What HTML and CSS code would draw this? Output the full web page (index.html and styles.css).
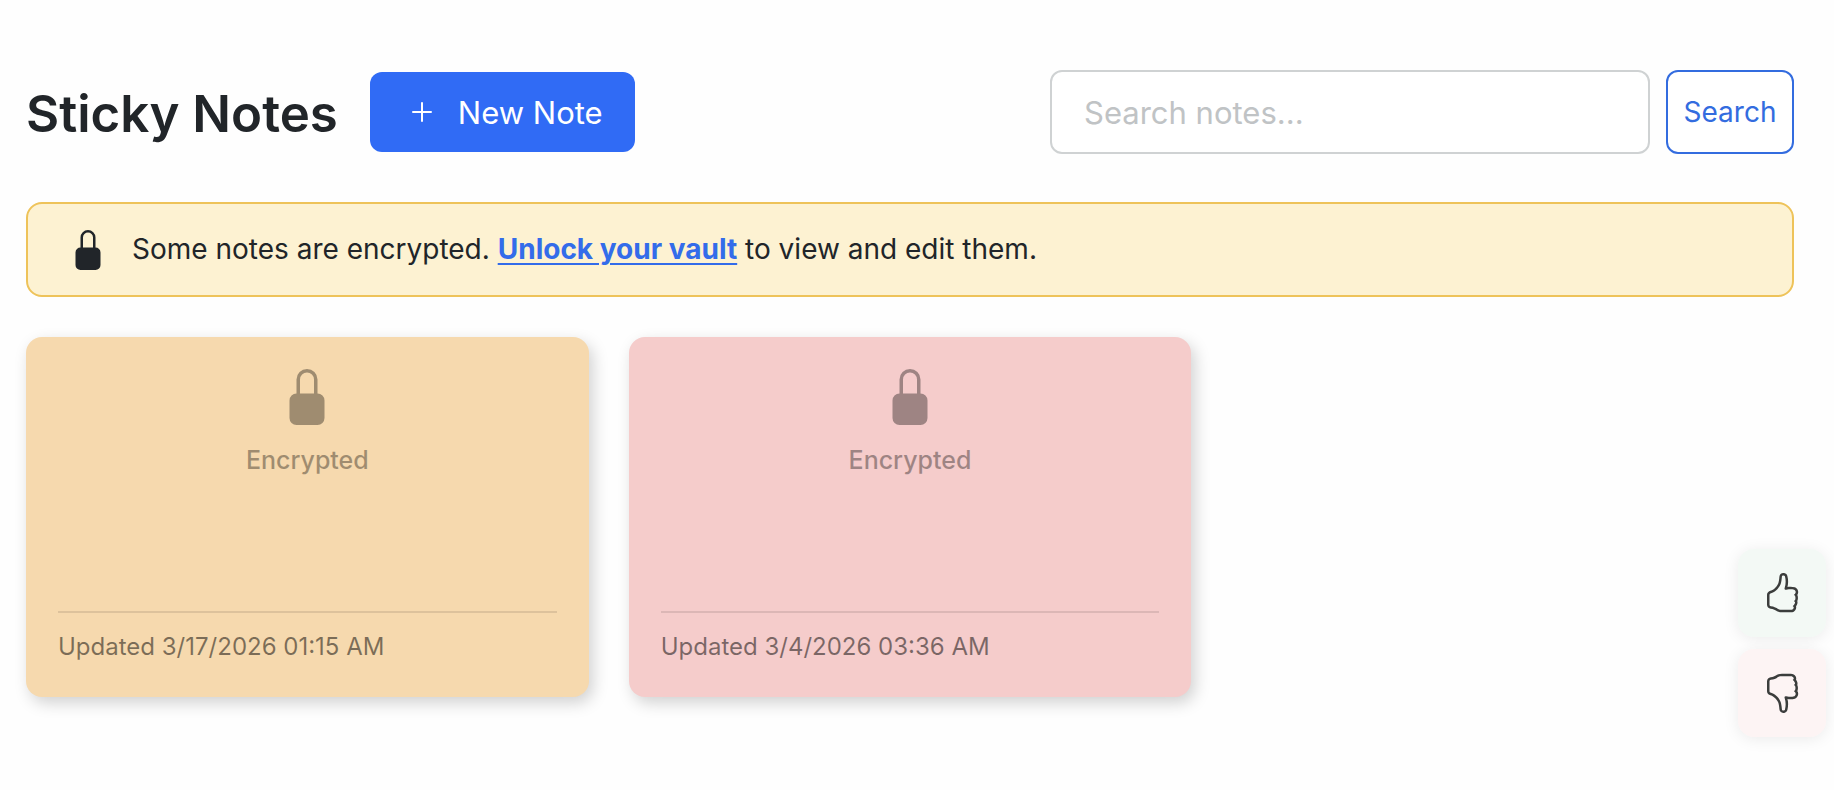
FILE: index.html
```
<!DOCTYPE html>
<html lang="en">
<head>
  <meta charset="utf-8">
  <title>Sticky Notes</title>
  <link rel="stylesheet" href="styles.css">
</head>
<body>
  <svg class="icon-defs" aria-hidden="true">
    <symbol id="lock" viewBox="0 0 16 16">
      <path d="M8 1a2 2 0 0 1 2 2v4H6V3a2 2 0 0 1 2-2zm3 6V3a3 3 0 0 0-6 0v4a2 2 0 0 0-2 2v5a2 2 0 0 0 2 2h6a2 2 0 0 0 2-2V9a2 2 0 0 0-2-2z"/>
    </symbol>
    <symbol id="thumb" viewBox="0 0 16 16">
      <path d="M8.864.046C7.908-.193 7.02.53 6.956 1.466c-.072 1.051-.23 2.016-.428 2.59-.125.36-.479 1.013-1.04 1.639-.557.623-1.282 1.178-2.131 1.41C2.685 7.288 2 7.87 2 8.72v4.001c0 .845.682 1.464 1.448 1.545 1.07.114 1.564.415 2.068.723l.048.03c.272.165.578.348.97.484.397.136.861.217 1.466.217h3.5c.937 0 1.599-.477 1.934-1.064a1.86 1.86 0 0 0 .254-.912c0-.152-.023-.312-.077-.464.201-.263.38-.578.488-.901.11-.33.172-.762.004-1.149.069-.13.12-.269.159-.403.077-.27.113-.568.113-.857 0-.288-.036-.585-.113-.856a2.144 2.144 0 0 0-.138-.362 1.9 1.9 0 0 0 .234-1.734c-.206-.592-.682-1.1-1.2-1.272-.847-.282-1.803-.276-2.516-.211a9.84 9.84 0 0 0-.443.05 9.365 9.365 0 0 0-.062-4.509A1.38 1.38 0 0 0 9.125.111L8.864.046zM11.5 14.721H8c-.51 0-.863-.069-1.14-.164-.281-.097-.506-.228-.776-.393l-.04-.024c-.555-.339-1.198-.731-2.49-.868-.333-.036-.554-.29-.554-.55V8.72c0-.254.226-.543.62-.65 1.095-.3 1.977-.996 2.614-1.708.635-.71 1.064-1.475 1.238-1.978.243-.7.407-1.768.482-2.85.025-.362.36-.594.667-.518l.262.066c.16.04.258.143.288.255a8.34 8.34 0 0 1-.145 4.725.5.5 0 0 0 .595.644l.003-.001.014-.003.058-.014a8.908 8.908 0 0 1 1.036-.157c.663-.06 1.457-.054 2.11.164.175.058.45.3.57.65.107.308.087.67-.266 1.022l-.353.353.353.354c.043.043.105.141.154.315.048.167.075.37.075.581 0 .212-.027.414-.075.582-.05.174-.111.272-.154.315l-.353.353.353.354c.047.047.109.177.005.488a2.224 2.224 0 0 1-.505.805l-.353.353.353.354c.006.005.041.05.041.17a.866.866 0 0 1-.121.416c-.165.288-.503.56-1.066.56z"/>
    </symbol>
  </svg>

  <main class="page">
    <header class="header">
      <h1>Sticky Notes</h1>
      <button type="button" class="btn btn-primary">
        <svg class="icon-plus" viewBox="0 0 16 16" aria-hidden="true">
          <path d="M8 3.5v9M3.5 8h9"/>
        </svg>
        New Note
      </button>
      <form class="search">
        <input type="search" class="search-input" placeholder="Search notes..." aria-label="Search notes">
        <button type="button" class="btn btn-outline">Search</button>
      </form>
    </header>

    <div class="vault-banner">
      <svg class="icon-lock" aria-hidden="true"><use href="#lock"/></svg>
      <p>Some notes are encrypted. <a href="#">Unlock your vault</a> to view and edit them.</p>
    </div>

    <section class="notes">
      <article class="note note-orange">
        <div class="note-locked">
          <svg class="icon-lock-lg" aria-hidden="true"><use href="#lock"/></svg>
          <span>Encrypted</span>
        </div>
        <footer class="note-footer">Updated 3/17/2026 01:15 AM</footer>
      </article>
      <article class="note note-pink">
        <div class="note-locked">
          <svg class="icon-lock-lg" aria-hidden="true"><use href="#lock"/></svg>
          <span>Encrypted</span>
        </div>
        <footer class="note-footer">Updated 3/4/2026 03:36 AM</footer>
      </article>
    </section>
  </main>

  <div class="feedback">
    <button type="button" class="feedback-btn feedback-up" aria-label="Thumbs up">
      <svg class="icon-thumb" aria-hidden="true"><use href="#thumb"/></svg>
    </button>
    <button type="button" class="feedback-btn feedback-down" aria-label="Thumbs down">
      <svg class="icon-thumb" aria-hidden="true"><use href="#thumb"/></svg>
    </button>
  </div>
</body>
</html>
```
FILE: styles.css
```
* {
  box-sizing: border-box;
}

body {
  margin: 0;
  background-color: #fefefe;
  color: #212529;
  font-family: Inter, "Liberation Sans", sans-serif;
}

svg {
  flex-shrink: 0;
  fill: currentColor;
}

.icon-defs {
  display: none;
}

.page {
  padding: 70px 40px 40px 26px;
}

/* Header */
.header {
  display: flex;
  align-items: center;
  margin-bottom: 48px;
}

h1 {
  margin: 0;
  padding: 4px 32px 0 0;
  font-size: 51px;
  font-weight: 600;
  line-height: 64px;
  white-space: nowrap;
}

.btn {
  display: flex;
  align-items: center;
  justify-content: center;
  border-radius: 12px;
  font-family: inherit;
  white-space: nowrap;
  cursor: pointer;
}

.btn-primary {
  gap: 20px;
  height: 80px;
  padding: 0 32px 0 36px;
  border: 0;
  background-color: #306bf5;
  color: #fff;
  font-size: 31px;
}

.icon-plus {
  width: 32px;
  height: 32px;
  stroke: currentColor;
  stroke-linecap: round;
}

.search {
  display: flex;
  gap: 16px;
  width: 744px;
  margin-left: auto;
}

.search-input {
  flex: 1;
  min-width: 0;
  height: 84px;
  padding: 0 32px;
  border: 2px solid #cfd2d3;
  border-radius: 12px;
  background-color: #fff;
  color: inherit;
  font-family: inherit;
  font-size: 31px;
}

.search-input::placeholder {
  color: #c0c3c5;
}

.btn-outline {
  width: 128px;
  padding: 0;
  border: 2px solid #336cdf;
  background-color: #fff;
  color: #336cdf;
  font-size: 28px;
}

/* Vault banner */
.vault-banner {
  display: flex;
  align-items: center;
  gap: 24px;
  padding: 24px 40px;
  margin-bottom: 40px;
  border: 2px solid #eec35a;
  border-radius: 16px;
  background-color: #fdf2d2;
}

.vault-banner p {
  margin: 0;
  font-size: 28px;
  line-height: 43px;
}

.vault-banner a {
  color: #336cea;
  font-weight: 700;
  text-underline-offset: 4px;
  text-decoration-thickness: 2px;
}

.icon-lock {
  width: 40px;
  height: 40px;
}

/* Notes */
.notes {
  display: grid;
  grid-template-columns: repeat(3, 1fr);
  gap: 40px;
}

.note {
  display: flex;
  flex-direction: column;
  min-height: 360px;
  padding: 32px;
  border-radius: 16px;
  box-shadow: 4px 6px 16px rgba(0, 0, 0, 0.18);
}

.note-orange {
  background-color: #f6d9ae;
}

.note-pink {
  background-color: #f5cccb;
}

.note-locked {
  display: flex;
  flex: 1;
  flex-direction: column;
  align-items: center;
  gap: 16px;
  color: #000;
  font-size: 25px;
  font-weight: 500;
  line-height: 38px;
  opacity: 0.35;
}

.icon-lock-lg {
  width: 56px;
  height: 56px;
}

.note-footer {
  padding-top: 16px;
  border-top: 2px solid rgba(0, 0, 0, 0.1);
  color: rgba(0, 0, 0, 0.5);
  font-size: 24px;
  line-height: 36px;
}

/* Feedback buttons, fixed to the side of the window */
.feedback {
  position: fixed;
  right: 8px;
  bottom: 53px;
  display: flex;
  flex-direction: column;
  gap: 12px;
}

.feedback-btn {
  display: flex;
  align-items: center;
  justify-content: center;
  width: 88px;
  height: 88px;
  border: 0;
  border-radius: 16px;
  box-shadow: 0 2px 16px rgba(0, 0, 0, 0.08);
  color: #3b3d3c;
  cursor: pointer;
}

.feedback-up {
  background-color: #f3f9f5;
}

.feedback-down {
  background-color: #fdf4f4;
}

.icon-thumb {
  width: 40px;
  height: 40px;
}

.feedback-down .icon-thumb {
  transform: scaleY(-1);
}
```
